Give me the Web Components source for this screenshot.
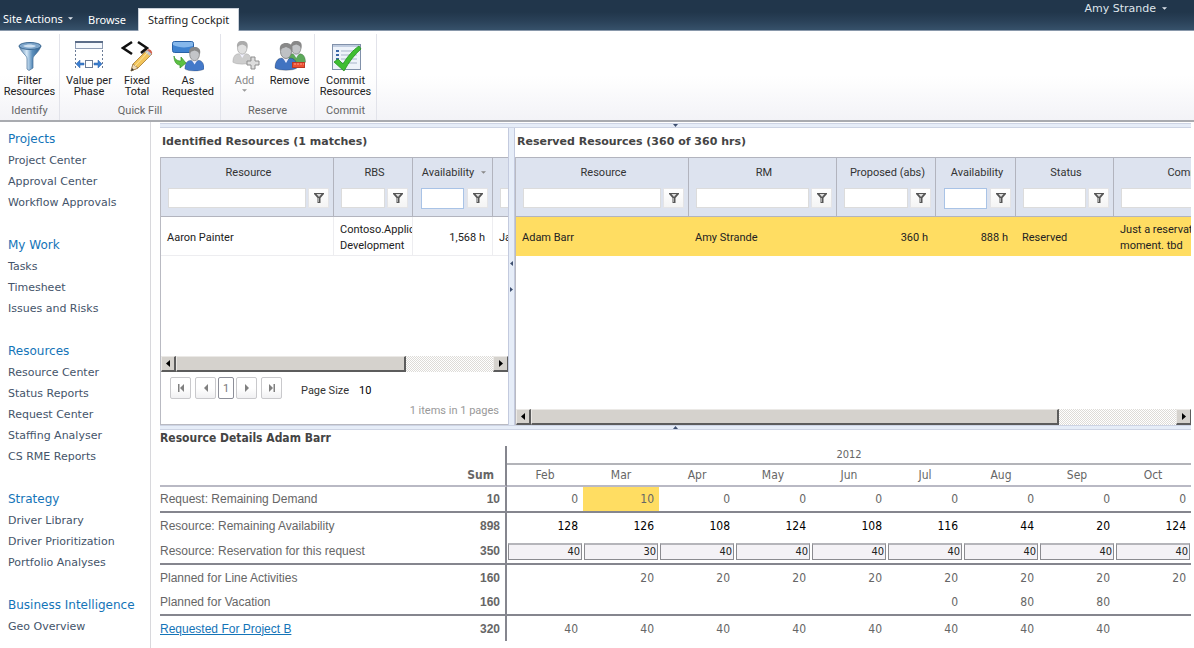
<!DOCTYPE html>
<html lang="en">
<head>
<meta charset="utf-8">
<title>Staffing Cockpit</title>
<style>
html, body { margin: 0; background: #fff; }
body { font-family: "DejaVu Sans Condensed", "DejaVu Sans", sans-serif; font-size: 11px; color: #333; overflow-x: hidden; }
</style>
</head>
<body>
<staffing-app></staffing-app>

<template id="app-t">
<style>
:host { display: block; min-height: 100vh; }
.body { display: grid; grid-template-columns: 151px minmax(0, 1fr); }
side-nav { border-right: 1px solid #d8d8dc; min-height: 526px; }
main { padding: 1px 3px 0 9px; min-width: 0; }
.panes { display: grid; grid-template-columns: 348px 7px minmax(0, 1fr); min-height: 297px; }
.pane { display: flex; flex-direction: column; min-width: 0; overflow: hidden; }
h2 { margin: 0; height: 29px; line-height: 27px; padding-left: 2px; font-family: "DejaVu Sans", Verdana, sans-serif; font-size: 11px; font-weight: bold; color: #444; white-space: nowrap; }
.frame { flex: 1; display: flex; flex-direction: column; border-left: 1px solid #b9bac2; min-width: 0; }
.space { flex: 1; }
h2.title { height: 17px; line-height: 17px; padding: 0; font-family: inherit; font-size: 12px; }
</style>
<app-header></app-header>
<ribbon-bar></ribbon-bar>
<div class="body">
  <side-nav></side-nav>
  <main>
    <split-bar dir="h" arrows="down"></split-bar>
    <div class="panes">
      <section class="pane">
        <h2>Identified Resources (1 matches)</h2>
        <div class="frame">
          <resource-grid data="identified"></resource-grid>
          <div class="space"></div>
          <scroll-strip style="--thumb:231;--rest:88"></scroll-strip>
          <pager-bar></pager-bar>
        </div>
      </section>
      <split-bar dir="v"></split-bar>
      <section class="pane">
        <h2>Reserved Resources (360 of 360 hrs)</h2>
        <div class="frame">
          <resource-grid data="reserved"></resource-grid>
          <div class="space"></div>
          <scroll-strip style="--thumb:528;--rest:118"></scroll-strip>
        </div>
      </section>
    </div>
    <split-bar dir="h" arrows="up"></split-bar>
    <h2 class="title">Resource Details Adam Barr</h2>
    <detail-grid></detail-grid>
  </main>
</div>
</template>

<template id="header-t">
<style>
:host { display: flex; align-items: flex-end; height: 30px; background: linear-gradient(#21364b 0 40%, #2a4158 70%, #36516a); border-bottom: 1px solid #8998ab; color: #fff; font-family: "Noto Sans", sans-serif; font-size: 11px; }
button, a { font: inherit; color: inherit; background: none; border: 0; padding: 0; margin: 0; text-decoration: none; white-space: nowrap; }
button { display: flex; align-items: center; gap: 5px; }
svg { width: 5px; height: 3px; fill: #dfe5ec; }
.site { padding-left: 3px; height: 24px; width: 88px; box-sizing: border-box; }
.browse { height: 20px; line-height: 20px; width: 50px; }
.tab { height: 22px; line-height: 22px; padding: 0 9px; background: #fff; color: #222; margin-bottom: -1px; border: 1px solid #c9d0da; border-bottom: 0; }
.user { margin-left: auto; margin-right: 27px; height: 16px; align-self: flex-start; font-family: "DejaVu Sans", sans-serif; color: #dfe5ec; gap: 6px; }
</style>
<button class="site">Site Actions <svg viewBox="0 0 6 3"><path d="M0 0h6L3 3z"/></svg></button>
<a class="browse" href="#">Browse</a>
<a class="tab" href="#">Staffing Cockpit</a>
<button class="user">Amy Strande <svg viewBox="0 0 6 3"><path d="M0 0h6L3 3z"/></svg></button>
</template>

<template id="ribbon-t">
<style>
:host { display: flex; background: linear-gradient(#fff 50%, #f3f3f7); border-bottom: 2px solid #a9abb0; box-sizing: border-box; height: 91px; }
</style>
<ribbon-group label="Identify" style="--w:59px"><ribbon-button icon="filter" style="--w:57px">Filter<br>Resources</ribbon-button></ribbon-group>
<ribbon-group label="Quick Fill" style="--w:160px"><ribbon-button icon="phase" style="--w:54px">Value per<br>Phase</ribbon-button><ribbon-button icon="fixed" style="--w:42px">Fixed<br>Total</ribbon-button><ribbon-button icon="requested" style="--w:60px">As<br>Requested</ribbon-button></ribbon-group>
<ribbon-group label="Reserve" style="--w:93px"><ribbon-button icon="add" muted style="--w:44px">Add</ribbon-button><ribbon-button icon="remove" style="--w:46px">Remove</ribbon-button></ribbon-group>
<ribbon-group label="Commit" style="--w:61px"><ribbon-button icon="commit" style="--w:58px">Commit<br>Resources</ribbon-button></ribbon-group>
</template>

<template id="group-t">
<style>
:host { display: flex; flex-direction: column; width: var(--w); margin-top: 3px; border-right: 1px solid #e2e3ea; font-family: Roboto, sans-serif; font-size: 11px; }
.row { display: flex; justify-content: center; flex: 1; padding-top: 6px; }
.label { text-align: center; height: 18px; line-height: 18px; color: #666; }
</style>
<div class="row"><slot></slot></div>
<div class="label"></div>
</template>

<template id="rbtn-t">
<style>
:host { display: block; width: var(--w); }
button { display: flex; flex-direction: column; align-items: center; gap: 3px; width: 100%; padding: 0; border: 0; background: none; font: inherit; line-height: 11px; color: #222; white-space: nowrap; }
:host([muted]) button { color: #888; }
svg { width: 32px; height: 32px; }
.more { width: 5px; height: 3px; fill: #999; }
</style>
<button></button>
</template>

<template id="nav-t">
<style>
:host { display: block; font-family: "DejaVu Sans", Verdana, sans-serif; padding: 6px 0 0 8px; box-sizing: border-box; }
section { margin-bottom: 21px; }
h3 { margin: 0; font-size: 12px; font-weight: normal; line-height: 22px; height: 22px; }
h3 a { color: #1474b8; }
a { display: block; text-decoration: none; color: #44546a; font-size: inherit; white-space: nowrap; }
li a { line-height: 21px; height: 21px; font-size: 11px; }
ul { list-style: none; margin: 0; padding: 0; }
</style>
<nav></nav>
</template>

<script>
const T = id => document.getElementById(id).content.cloneNode(true);
class Base extends HTMLElement {
  constructor() { super(); this.attachShadow({ mode: 'open' }); }
  fill(id) { this.shadowRoot.append(T(id)); return this.shadowRoot; }
}

const person = (x, y, s, body, head) => `<g transform="translate(${x} ${y}) scale(${s})"><path d="M1 25c0-7 3-10 7-10l4 3 4-3c4 0 7 3 7 10-4 3-18 3-22 0z" fill="${body}" stroke="#0004" stroke-width=".8"/><path d="M9 15l3 5 3-5z" fill="#eef"/><ellipse cx="12" cy="8.500" rx="5.500" ry="7" fill="${head}" stroke="#777" stroke-width=".8"/><path d="M6 8C5 2 8 0 12 0s8 2 6 9c-1-4-4-4-6-5-2 1-5 1-6 4z" fill="#888"/></g>`;
const ICONS = {
  filter: `<defs><linearGradient id="f"><stop stop-color="#5a85ad"/><stop offset=".35" stop-color="#d5e8f7"/><stop offset=".6" stop-color="#5d90bd"/><stop offset="1" stop-color="#2c5f8f"/></linearGradient></defs><path d="M5 6c3 8 8 9 8 13v10l2 1.500 4-2.500V19c0-4 5-5 8-13z" fill="url(#f)" stroke="#466f96" stroke-width=".7"/><ellipse cx="16" cy="6" rx="11" ry="3.500" fill="#7fa6cb" stroke="#3f6b94"/><path d="M9 6c4-2 9-2 13 0-3 2-9 2-13 0z" fill="#cfe1f1"/>`,
  phase: `<rect x="2.500" y="2.500" width="27" height="6" fill="#f5f8fc" stroke="#8d9bb2"/><path d="M2 2h28" stroke="#5c6d88" stroke-width="2"/><path d="M2.500 10v20M29.500 10v20" stroke="#6b7c96" stroke-dasharray="2 2"/><rect x="12.500" y="20.500" width="7" height="7" fill="#fff" stroke="#6b7c96"/><path d="M3 24l4-4v3h4v2H7v3zM29 24l-4-4v3h-4v2h4v3z" fill="#3c7fd0" stroke="#2a61a9" stroke-width=".5"/>`,
  fixed: `<path d="M11 2L2 8l9 6M17 2l9 6-6 5" fill="none" stroke="#111" stroke-width="2.600"/><path d="M10 31l2-7L26 10l5 4-14 14z" fill="#f2c45a" stroke="#a5762c" stroke-width=".8"/><path d="M10 31l2-7 5 4z" fill="#ecd9b8" stroke="#8a6a3c" stroke-width=".6"/><path d="M10 31l1-3 2 2z" fill="#333"/><path d="M24 12l3-2.500 4 4-2 2.500z" fill="#bcc3cf"/><path d="M26 10c2-2 6 1 5 4z" fill="#d4604c"/><path d="M14 26L27 12" stroke="#fbe6a2"/>`,
  requested: `<rect x=".5" y="1.500" width="21" height="11" rx="2" fill="#3f82cf" stroke="#2a62a6"/><path d="M1 5V3l1-1h18l1 1v3c-6 2-14 2-20-1z" fill="#86b8ec"/>${person(12, 7, .88, '#4479c9', '#c3c5c8')}<path d="M2 16c1 4 4 5 7 5v-4l5 6-6 5v-3c-4 0-6-4-6-9z" fill="#5cc142" stroke="#35912a" stroke-width=".7"/>`,
  add: `<g opacity=".7">${person(3, 1, .85, '#b9b9b9', '#d4d4d4')}</g><path d="M22 17h4v4h4v4h-4v4h-4v-4h-4v-4h4z" fill="#ddd" stroke="#8d8d8d"/>`,
  remove: `${person(12, 1, .85, '#5da95a', '#c3c5c8')}${person(0, 3, 1, '#4173c1', '#bfc1c4')}<rect x="18.500" y="22.500" width="12" height="5" fill="#ec5032" stroke="#b93a24"/><path d="M20 24h10" stroke="#ff9f88" stroke-dasharray="2 1"/>`,
  commit: `<rect x="2.500" y="4.500" width="28" height="25" fill="#eef3fa" stroke="#8191aa"/><path d="M3 6h27" stroke="#c1cde0" stroke-width="2"/><path d="M6 11h3M6 15h3M6 19h3M6 23h3" stroke="#3a67a7" stroke-width="2"/><path d="M11 11h16M11 15h16M11 19h16M11 23h16" stroke="#a7b5ca"/><path d="M4 22l4-3 5 5C17 17 23 10 29 6l2 3C24 15 19 22 14 31z" fill="#3fbe32" stroke="#259020" stroke-width=".8"/>`
};
const FUNNEL = `<svg viewBox="0 0 12 12"><path d="M1 1h10v1L7.500 6v5h-3V6L1 2z" fill="#555"/><path d="M3.500 2h5L6 5z" fill="#ddd"/><path d="M5 6h1v4H5z" fill="#aaa"/></svg>`;

customElements.define('staffing-app', class extends Base { connectedCallback() { this.fill('app-t'); } });
customElements.define('app-header', class extends Base { connectedCallback() { this.fill('header-t'); } });
customElements.define('ribbon-bar', class extends Base { connectedCallback() { this.fill('ribbon-t'); } });
customElements.define('ribbon-group', class extends Base {
  connectedCallback() { this.fill('group-t').querySelector('.label').textContent = this.getAttribute('label'); }
});
customElements.define('ribbon-button', class extends Base {
  connectedCallback() {
    const more = this.hasAttribute('muted') ? '<svg class="more" viewBox="0 0 6 3"><path d="M0 0h6L3 3z"/></svg>' : '';
    this.fill('rbtn-t').querySelector('button').innerHTML = `<svg viewBox="0 0 32 32">${ICONS[this.getAttribute('icon')]}</svg><span><slot></slot></span>${more}`;
  }
});

const NAV = [
  ['Projects', 'Project Center', 'Approval Center', 'Workflow Approvals'],
  ['My Work', 'Tasks', 'Timesheet', 'Issues and Risks'],
  ['Resources', 'Resource Center', 'Status Reports', 'Request Center', 'Staffing Analyser', 'CS RME Reports'],
  ['Strategy', 'Driver Library', 'Driver Prioritization', 'Portfolio Analyses'],
  ['Business Intelligence', 'Geo Overview']
];
customElements.define('side-nav', class extends Base {
  connectedCallback() {
    this.fill('nav-t').querySelector('nav').innerHTML = NAV.map(([h, ...items]) =>
      `<section><h3><a href="#">${h}</a></h3><ul>${items.map(i => `<li><a href="#">${i}</a></li>`).join('')}</ul></section>`).join('');
  }
});

customElements.define('split-bar', class extends Base {
  connectedCallback() {
    const v = this.getAttribute('dir') === 'v', a = this.getAttribute('arrows');
    const shape = { down: 'M0 1h5L2.500 4z', up: 'M0 4h5L2.500 1z', left: 'M4 0v5L1 2.500z', right: 'M1 0v5L4 2.500z' };
    this.shadowRoot.innerHTML = `<style>
:host { display: flex; align-items: center; justify-content: center; box-sizing: border-box; background: #e6edf8; }
:host([dir=h]) { height: 5px; border: solid #cdd4e4; border-width: 1px 0; }
:host([dir=v]) { flex-direction: column; gap: 21px; border: solid #c3cade; border-width: 0 1px; }
svg { width: 5px; height: 5px; fill: #3e4f70; flex: none; }
</style>${(v ? ['left', 'right'] : [a]).map(k => `<svg viewBox="0 0 5 5"><path d="${shape[k]}"/></svg>`).join('')}`;
  }
});

customElements.define('scroll-strip', class extends Base {
  connectedCallback() {
    this.shadowRoot.innerHTML = `<style>
:host { display: flex; height: 16px; background: repeating-conic-gradient(#dddbd7 0 25%, #fff 0 50%) 0 0 / 2px 2px; }
button, .thumb { box-sizing: border-box; background: #d5d2cd; border: 1px solid #ebe9e6; border-right: 2px solid #5c5c5c; border-bottom: 2px solid #5c5c5c; padding: 0; }
button { width: 15px; display: flex; align-items: center; justify-content: center; flex: none; }
button.r { border-right-width: 1px; }
.thumb { flex: var(--thumb) 0 0; }
.rest { flex: var(--rest) 0 0; }
svg { width: 4px; height: 7px; }
</style><button aria-label="Scroll left"><svg viewBox="0 0 4 7"><path d="M4 0v7L0 3.500z"/></svg></button><div class="thumb"></div><div class="rest"></div><button class="r" aria-label="Scroll right"><svg viewBox="0 0 4 7"><path d="M0 0v7l4-3.500z"/></svg></button>`;
  }
});

const GRIDS = {
  identified: { cols: [['Resource', 173], ['RBS', 79], ['Availability', 80, 'sort blue'], ['', 120]],
    row: ['Aaron Painter', 'Contoso.Application<br>Development', ['1,568 h'], 'Ja'] },
  reserved: { sel: true, cols: [['Resource', 173], ['RM', 148], ['Proposed (abs)', 99], ['Availability', 80, 'blue'], ['Status', 98], ['Comment', 153]],
    row: ['Adam Barr', 'Amy Strande', ['360 h'], ['888 h'], 'Reserved', 'Just a reservation<br>moment. tbd'] }
};
customElements.define('resource-grid', class extends Base {
  connectedCallback() {
    const g = GRIDS[this.getAttribute('data')];
    const total = g.cols.reduce((s, c) => s + c[1], 0);
    this.shadowRoot.innerHTML = `<style>
:host { display: block; overflow: hidden; font-family: Roboto, sans-serif; }
table { table-layout: fixed; width: ${total}px; border-collapse: separate; border-spacing: 0; }
th { height: 60px; box-sizing: border-box; padding: 5px 4px 0 7px; vertical-align: top; background: #dde3ef; border: solid #b2b4be; border-width: 1px 1px 1px 0; font-weight: normal; color: #333; }
.name { display: flex; align-items: center; justify-content: center; gap: 7px; height: 18px; white-space: nowrap; margin-bottom: 7px; }
.name svg { width: 5px; height: 3px; fill: #888; }
.f { display: flex; gap: 2px; }
input { flex: 1; min-width: 0; width: 0; height: 20px; box-sizing: border-box; border: 1px solid #dcdcdc; background: #fff; padding: 0 2px; font: inherit; }
.blue input { border-color: #a9c3e6; margin-left: 1px; height: 21px; margin-right: 1px; }
.f button { width: 21px; height: 20px; box-sizing: border-box; border: 1px solid #e4e4e6; background: linear-gradient(#fff, #f4f4f4); padding: 0; display: flex; align-items: center; justify-content: center; }
.f svg { width: 12px; height: 12px; }
td { height: 39px; box-sizing: border-box; padding: 3px 6px 0; line-height: 16px; white-space: nowrap; overflow: hidden; border: solid #ededf0; border-width: 0 1px 1px 0; color: #222; }
td.n { text-align: right; padding-right: 7px; }
.sel td { background: #ffdd62; border-color: #ffdd62; }
</style><table><colgroup>${g.cols.map(c => `<col style="width:${c[1]}px">`).join('')}</colgroup>
<thead><tr>${g.cols.map(([n, , k = '']) => `<th class="${k}"><div class="name">${n}${k.includes('sort') ? '<svg viewBox="0 0 6 3"><path d="M0 0h6L3 3z"/></svg>' : ''}</div><div class="f"><input aria-label="Filter ${n}"><button aria-label="Filter options">${FUNNEL}</button></div></th>`).join('')}</tr></thead>
<tbody><tr class="${g.sel ? 'sel' : ''}">${g.row.map(c => Array.isArray(c) ? `<td class="n">${c}</td>` : `<td>${c}</td>`).join('')}</tr></tbody></table>`;
  }
});

customElements.define('pager-bar', class extends Base {
  connectedCallback() {
    const b = (l, d) => `<button aria-label="${l}"><svg viewBox="0 0 8 8"><path d="${d}"/></svg></button>`;
    this.shadowRoot.innerHTML = `<style>
:host { display: block; height: 53px; box-sizing: border-box; padding: 5px 9px 0; border-bottom: 1px solid #b9bac2; font-family: Roboto, sans-serif; }
.row { display: flex; align-items: center; gap: 2px; height: 22px; }
button { box-sizing: border-box; width: 21px; height: 22px; padding: 0; border: 1px solid #c9c9cc; border-radius: 2px; background: linear-gradient(#fff 50%, #f0f0f2); display: flex; align-items: center; justify-content: center; font: inherit; color: #777; }
button.cur { width: 16px; border-color: #8d8f99; background: #fff; }
.end { margin-right: 2px; } .start { margin-left: 2px; }
svg { width: 8px; height: 8px; fill: #808080; }
.size { margin-left: 17px; padding-top: 4px; } .val { margin-left: 8px; padding-top: 4px; color: #000; }
.info { text-align: right; color: #999; height: 24px; line-height: 24px; }
</style><div class="row"><span class="end">${b('First page', 'M1 0h1.500v8H1zM7 0v8L3 4z')}</span>${b('Previous page', 'M6 0v8L2 4z')}<button class="cur">1</button>${b('Next page', 'M2 0v8l4-4z')}<span class="start">${b('Last page', 'M7 0H5.500v8H7zM1 0v8l4-4z')}</span><span class="size">Page Size</span><span class="val">10</span></div><div class="info">1 items in 1 pages</div>`;
  }
});

const MONTHS = ['Feb', 'Mar', 'Apr', 'May', 'Jun', 'Jul', 'Aug', 'Sep', 'Oct'];
const ROWS = [
  ['Request: Remaining Demand', 10, [0, 10, 0, 0, 0, 0, 0, 0, 0], 'line'],
  ['Resource: Remaining Availability', 898, [128, 126, 108, 124, 108, 116, 44, 20, 124], 'dark'],
  ['Resource: Reservation for this request', 350, [40, 30, 40, 40, 40, 40, 40, 40, 40], 'line edit'],
  ['Planned for Line Activities', 160, ['', 20, 20, 20, 20, 20, 20, 20, 20], 'short'],
  ['Planned for Vacation', 160, ['', '', '', '', '', 0, 80, 80, ''], 'line'],
  ['<a href="#">Requested For Project B</a>', 320, [40, 40, 40, 40, 40, 40, 40, 40, ''], 'short']
];
customElements.define('detail-grid', class extends Base {
  connectedCallback() {
    this.shadowRoot.innerHTML = `<style>
:host { display: block; margin-top: -1px; }
table { table-layout: fixed; width: 100%; border-collapse: separate; border-spacing: 0; font-size: 12px; color: #666; }
th, td { box-sizing: border-box; padding: 0; height: 26px; font-weight: normal; white-space: nowrap; }
col.l { width: 288px; } col.s { width: 59px; }
thead tr.y th { height: 19px; font-size: 11px; }
thead tr.y .yr { border-bottom: 2px solid #b3b4b9; }
thead tr.m th { height: 22px; border-bottom: 2px solid #b9b9c4; }
.sum { border-right: 2px solid #85868e; text-align: right; padding-right: 5px; font-weight: bold; font-family: "Liberation Sans", Arial, sans-serif; }
thead tr.m .sum { padding-right: 11px; font-family: inherit; font-weight: bold; }
tbody th { text-align: left; font-family: "Liberation Sans", Arial, sans-serif; }
tbody td.v { text-align: right; padding-right: 5px; }
.line th, .line td { border-bottom: 2px solid #85868e; }
.short th, .short td { height: 25px; }
.dark td.v { color: #000; }
.hot { background: #ffdd62; }
.edit td.v { padding: 0 1px; }
input { display: block; box-sizing: border-box; width: 100%; height: 17px; border: 1px solid #8b8b90; border-top-width: 2px; border-top-color: #b5b5ba; background: #f4f2f6; text-align: right; font: 11px "DejaVu Sans Condensed", sans-serif; color: #222; padding: 0 1px; }
a { color: #1474b8; }
</style><table><colgroup><col class="l"><col class="s">${MONTHS.map(() => '<col>').join('')}</colgroup>
<thead><tr class="y"><th></th><th class="sum"></th><th class="yr" colspan="9">2012</th></tr>
<tr class="m"><th></th><th class="sum">Sum</th>${MONTHS.map(m => `<th>${m}</th>`).join('')}</tr></thead>
<tbody>${ROWS.map(([l, s, v, k]) => `<tr class="${k}"><th scope="row">${l}</th><td class="sum">${s}</td>${v.map((n, i) =>
  k.includes('edit') ? `<td class="v"><input aria-label="Reservation ${MONTHS[i]}" value="${n}"></td>` : `<td class="v${l.startsWith('Request: ') && n === 10 ? ' hot' : ''}">${n}</td>`).join('')}</tr>`).join('')}</tbody></table>`;
  }
});
</script>
</body>
</html>
